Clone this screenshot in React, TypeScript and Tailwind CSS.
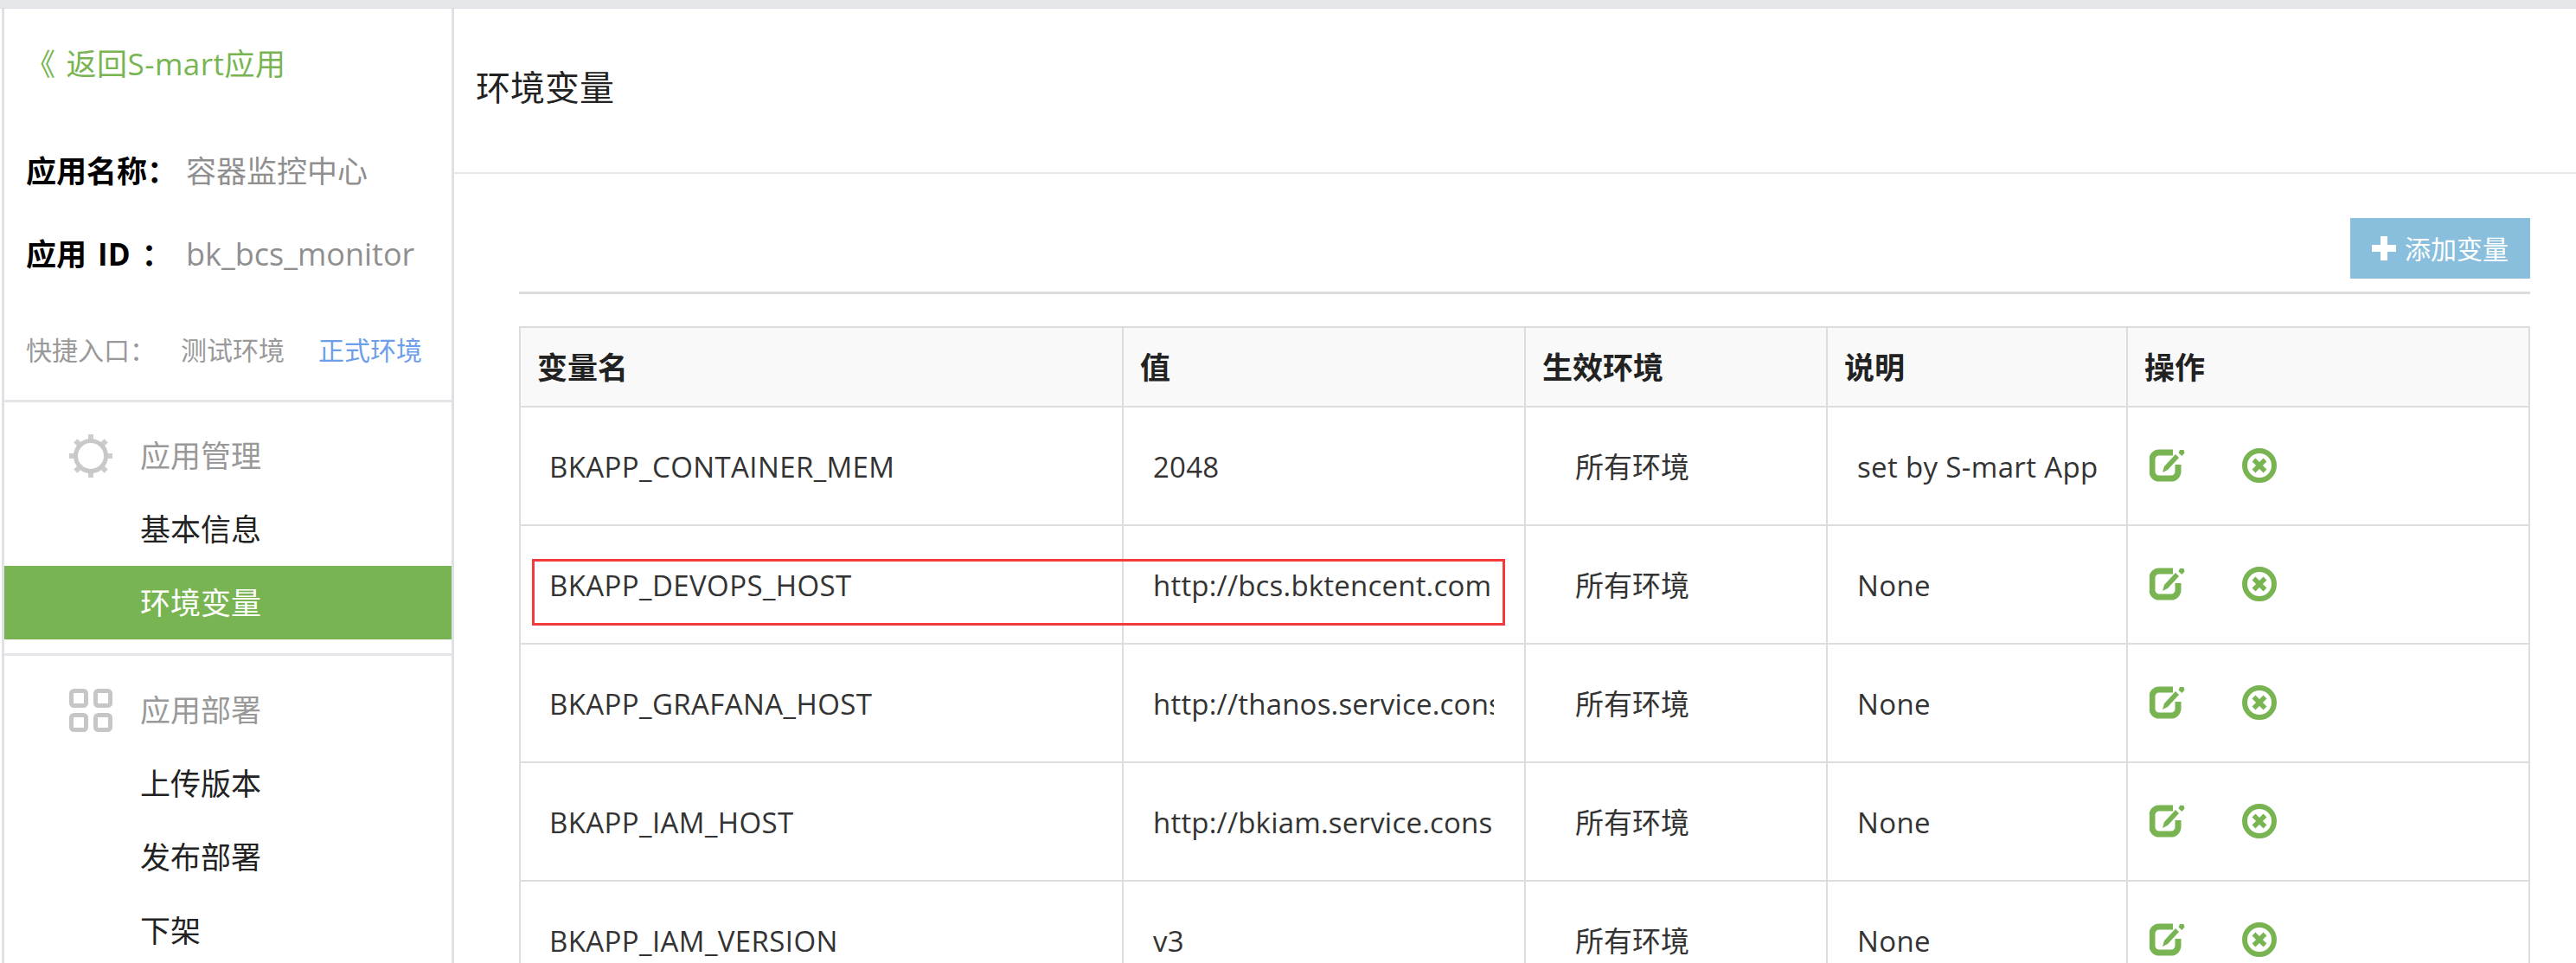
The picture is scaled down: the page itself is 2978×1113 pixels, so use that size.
const FONT = "font-['Open_Sans','Noto_Sans_CJK_SC',sans-serif]";

const rows = [
  ["BKAPP_CONTAINER_MEM", "2048", "所有环境", "set by S-mart App"],
  ["BKAPP_DEVOPS_HOST", "http://bcs.bktencent.com", "所有环境", "None"],
  ["BKAPP_GRAFANA_HOST", "http://thanos.service.consul", "所有环境", "None"],
  ["BKAPP_IAM_HOST", "http://bkiam.service.consul", "所有环境", "None"],
  ["BKAPP_IAM_VERSION", "v3", "所有环境", "None"],
];

function Gear() {
  const teeth = [0, 45, 90, 135, 180, 225, 270, 315];
  return (
    <svg viewBox="0 0 50 50" className="w-[50px] h-[50px] shrink-0">
      {teeth.map((a) => (
        <rect key={a} x="22" y="0" width="6" height="8" fill="#cccccc" transform={`rotate(${a} 25 25)`} />
      ))}
      <circle cx="25" cy="25" r="17.5" fill="none" stroke="#c8c8c8" strokeWidth="5" />
    </svg>
  );
}

function Grid4() {
  return (
    <svg viewBox="0 0 50 50" className="w-[50px] h-[50px] shrink-0">
      {[[2.5, 2.5], [30.5, 2.5], [2.5, 30.5], [30.5, 30.5]].map(([x, y]) => (
        <rect key={`${x}-${y}`} x={x} y={y} width="17" height="17" rx="3" fill="none" stroke="#c6c6c6" strokeWidth="5" />
      ))}
    </svg>
  );
}

function EditIcon() {
  return (
    <svg viewBox="0 0 41 38" className="w-[41px] h-[38px] shrink-0">
      <path d="M27 4 H11 a8 8 0 0 0 -8 8 V26 a8 8 0 0 0 8 8 H25 a8 8 0 0 0 8 -8 V18" fill="none" stroke="#78b552" strokeWidth="7" />
      <path d="M15 27 L17 20 L30 6 L34 10 L21 24 Z" fill="#78b552" />
      <path d="M35 1 L39.5 1 L40.5 4.5 L37.5 8 L33.5 4.5 Z" fill="#78b552" />
    </svg>
  );
}

function DeleteIcon() {
  return (
    <svg viewBox="0 0 40 40" className="w-[40px] h-[40px] shrink-0">
      <circle cx="20" cy="20" r="17" fill="none" stroke="#78b552" strokeWidth="6" />
      <path d="M13.5 13.5 L26.5 26.5 M26.5 13.5 L13.5 26.5" fill="none" stroke="#78b552" strokeWidth="5.5" />
    </svg>
  );
}

function NavGroup({ icon, title, items, active }: { icon: React.ReactNode; title: string; items: string[]; active?: string }) {
  return (
    <div>
      <div className="h-[85px] flex items-center pl-[75px] text-[35px] text-[#999]">
        {icon}
        <span className="ml-[32px] pt-[2px]">{title}</span>
      </div>
      {items.map((t) => (
        <div
          key={t}
          className={`h-[85px] flex items-center pl-[157px] pt-[2px] text-[35px] ${t === active ? "bg-[#78b552] text-white" : "text-[#222]"}`}
        >
          {t}
        </div>
      ))}
    </div>
  );
}

export default function App() {
  return (
    <div className={`${FONT} h-[1113px] overflow-hidden bg-white flex flex-col`}>
      <div className="h-[10px] bg-[#e4e6ea] border-b border-[#dcdde2] shrink-0" />
      <div className="flex flex-1 min-h-0">
        <aside className="ml-[2px] border-l-[3px] border-r-[3px] border-[#e0e1e6] box-content shrink-0 w-[517px]">
          <a className="block mt-[29px] ml-[24px] h-[70px] leading-[70px] text-[35px] tracking-[0.5px] text-[#78b552]">
            《<span className="ml-[12px]">返回S-mart应用</span>
          </a>
          <div className="mt-[54px] ml-[25px] h-[70px] flex items-center text-[35px]">
            <span className="w-[185px] font-bold text-black">应用名称：</span>
            <span className="text-[#8f8f8f]">容器监控中心</span>
          </div>
          <div className="mt-[26px] ml-[25px] h-[70px] flex items-center text-[35px]">
            <span className="w-[185px] font-bold text-black whitespace-pre">应用 <span className="ml-[4px]">ID</span> <span className="ml-[4px]">：</span></span>
            <span className="text-[#8f8f8f] text-[36px]">bk_bcs_monitor</span>
          </div>
          <div className="mt-[50px] ml-[25px] h-[50px] flex items-center text-[30px] text-[#999]">
            <span className="w-[179px]">快捷入口：</span>
            <span className="w-[159px]">测试环境</span>
            <span className="text-[#6d9eeb]">正式环境</span>
          </div>
          <div className="mt-[33px] h-[3px] bg-[#e4e5e9]" />
          <div className="pt-[19px]">
            <NavGroup icon={<Gear />} title="应用管理" items={["基本信息", "环境变量"]} active="环境变量" />
          </div>
          <div className="mt-[16px] h-[3px] bg-[#e4e5e9]" />
          <div className="pt-[20px]">
            <NavGroup icon={<Grid4 />} title="应用部署" items={["上传版本", "发布部署", "下架"]} />
          </div>
        </aside>
        <main className="flex-1 min-w-0">
          <div className="h-[191px] border-b-2 border-[#e6e7ea] flex items-center pl-[25px] pb-[8px] text-[40px] text-[#222]">
            环境变量
          </div>
          <div className="relative pl-[75px] pr-[53px] pt-[51px]">
            <div className="border-b-[3px] border-[#ddd] pb-[15px] flex justify-end">
              <button className="w-[208px] h-[70px] bg-[#89bfdd] text-white text-[30px] flex items-center pl-[25px]">
                <svg viewBox="0 0 28 28" className="w-[28px] h-[28px] mr-[10px]">
                  <path d="M10 0 H18 V10 H28 V18 H18 V28 H10 V18 H0 V10 H10 Z" fill="#fff" />
                </svg>
                添加变量
              </button>
            </div>
            <table className="mt-[37px] w-full table-fixed border-collapse text-[#333]">
              <colgroup>
                <col className="w-[697px]" />
                <col className="w-[465px]" />
                <col className="w-[349px]" />
                <col className="w-[347px]" />
                <col />
              </colgroup>
              <thead>
                <tr className="h-[92px] bg-[#f9f9f9] text-[35px] font-bold text-[#222]">
                  {["变量名", "值", "生效环境", "说明", "操作"].map((h) => (
                    <th key={h} className="border-2 border-[#ddd] pl-[19px] pt-[3px] text-left">{h}</th>
                  ))}
                </tr>
              </thead>
              <tbody>
                {rows.map((r) => (
                  <tr key={r[0]} className="h-[137px] text-[33px]">
                    <td className="border-2 border-[#ddd] pl-[33px] pt-[2px] tracking-[0.4px]">{r[0]}</td>
                    <td className="border-2 border-[#ddd] pl-[34px] pt-[2px]">
                      <div className="w-[394px] overflow-hidden whitespace-nowrap tracking-[0.2px]">{r[1]}</div>
                    </td>
                    <td className="border-2 border-[#ddd] pl-[57px] pt-[2px]">{r[2]}</td>
                    <td className="border-2 border-[#ddd] pl-[34px] pt-[2px]">
                      <div className="w-[277px] overflow-hidden whitespace-nowrap tracking-[0.35px]">{r[3]}</div>
                    </td>
                    <td className="border-2 border-[#ddd] pl-[25px]">
                      <div className="flex items-center gap-[66px] -mt-[2px]">
                        <EditIcon />
                        <DeleteIcon />
                      </div>
                    </td>
                  </tr>
                ))}
              </tbody>
            </table>
            <div className="absolute left-[90px] top-[445px] w-[1125px] h-[77px] border-[3px] border-[#f33b3b]" />
          </div>
        </main>
      </div>
    </div>
  );
}
